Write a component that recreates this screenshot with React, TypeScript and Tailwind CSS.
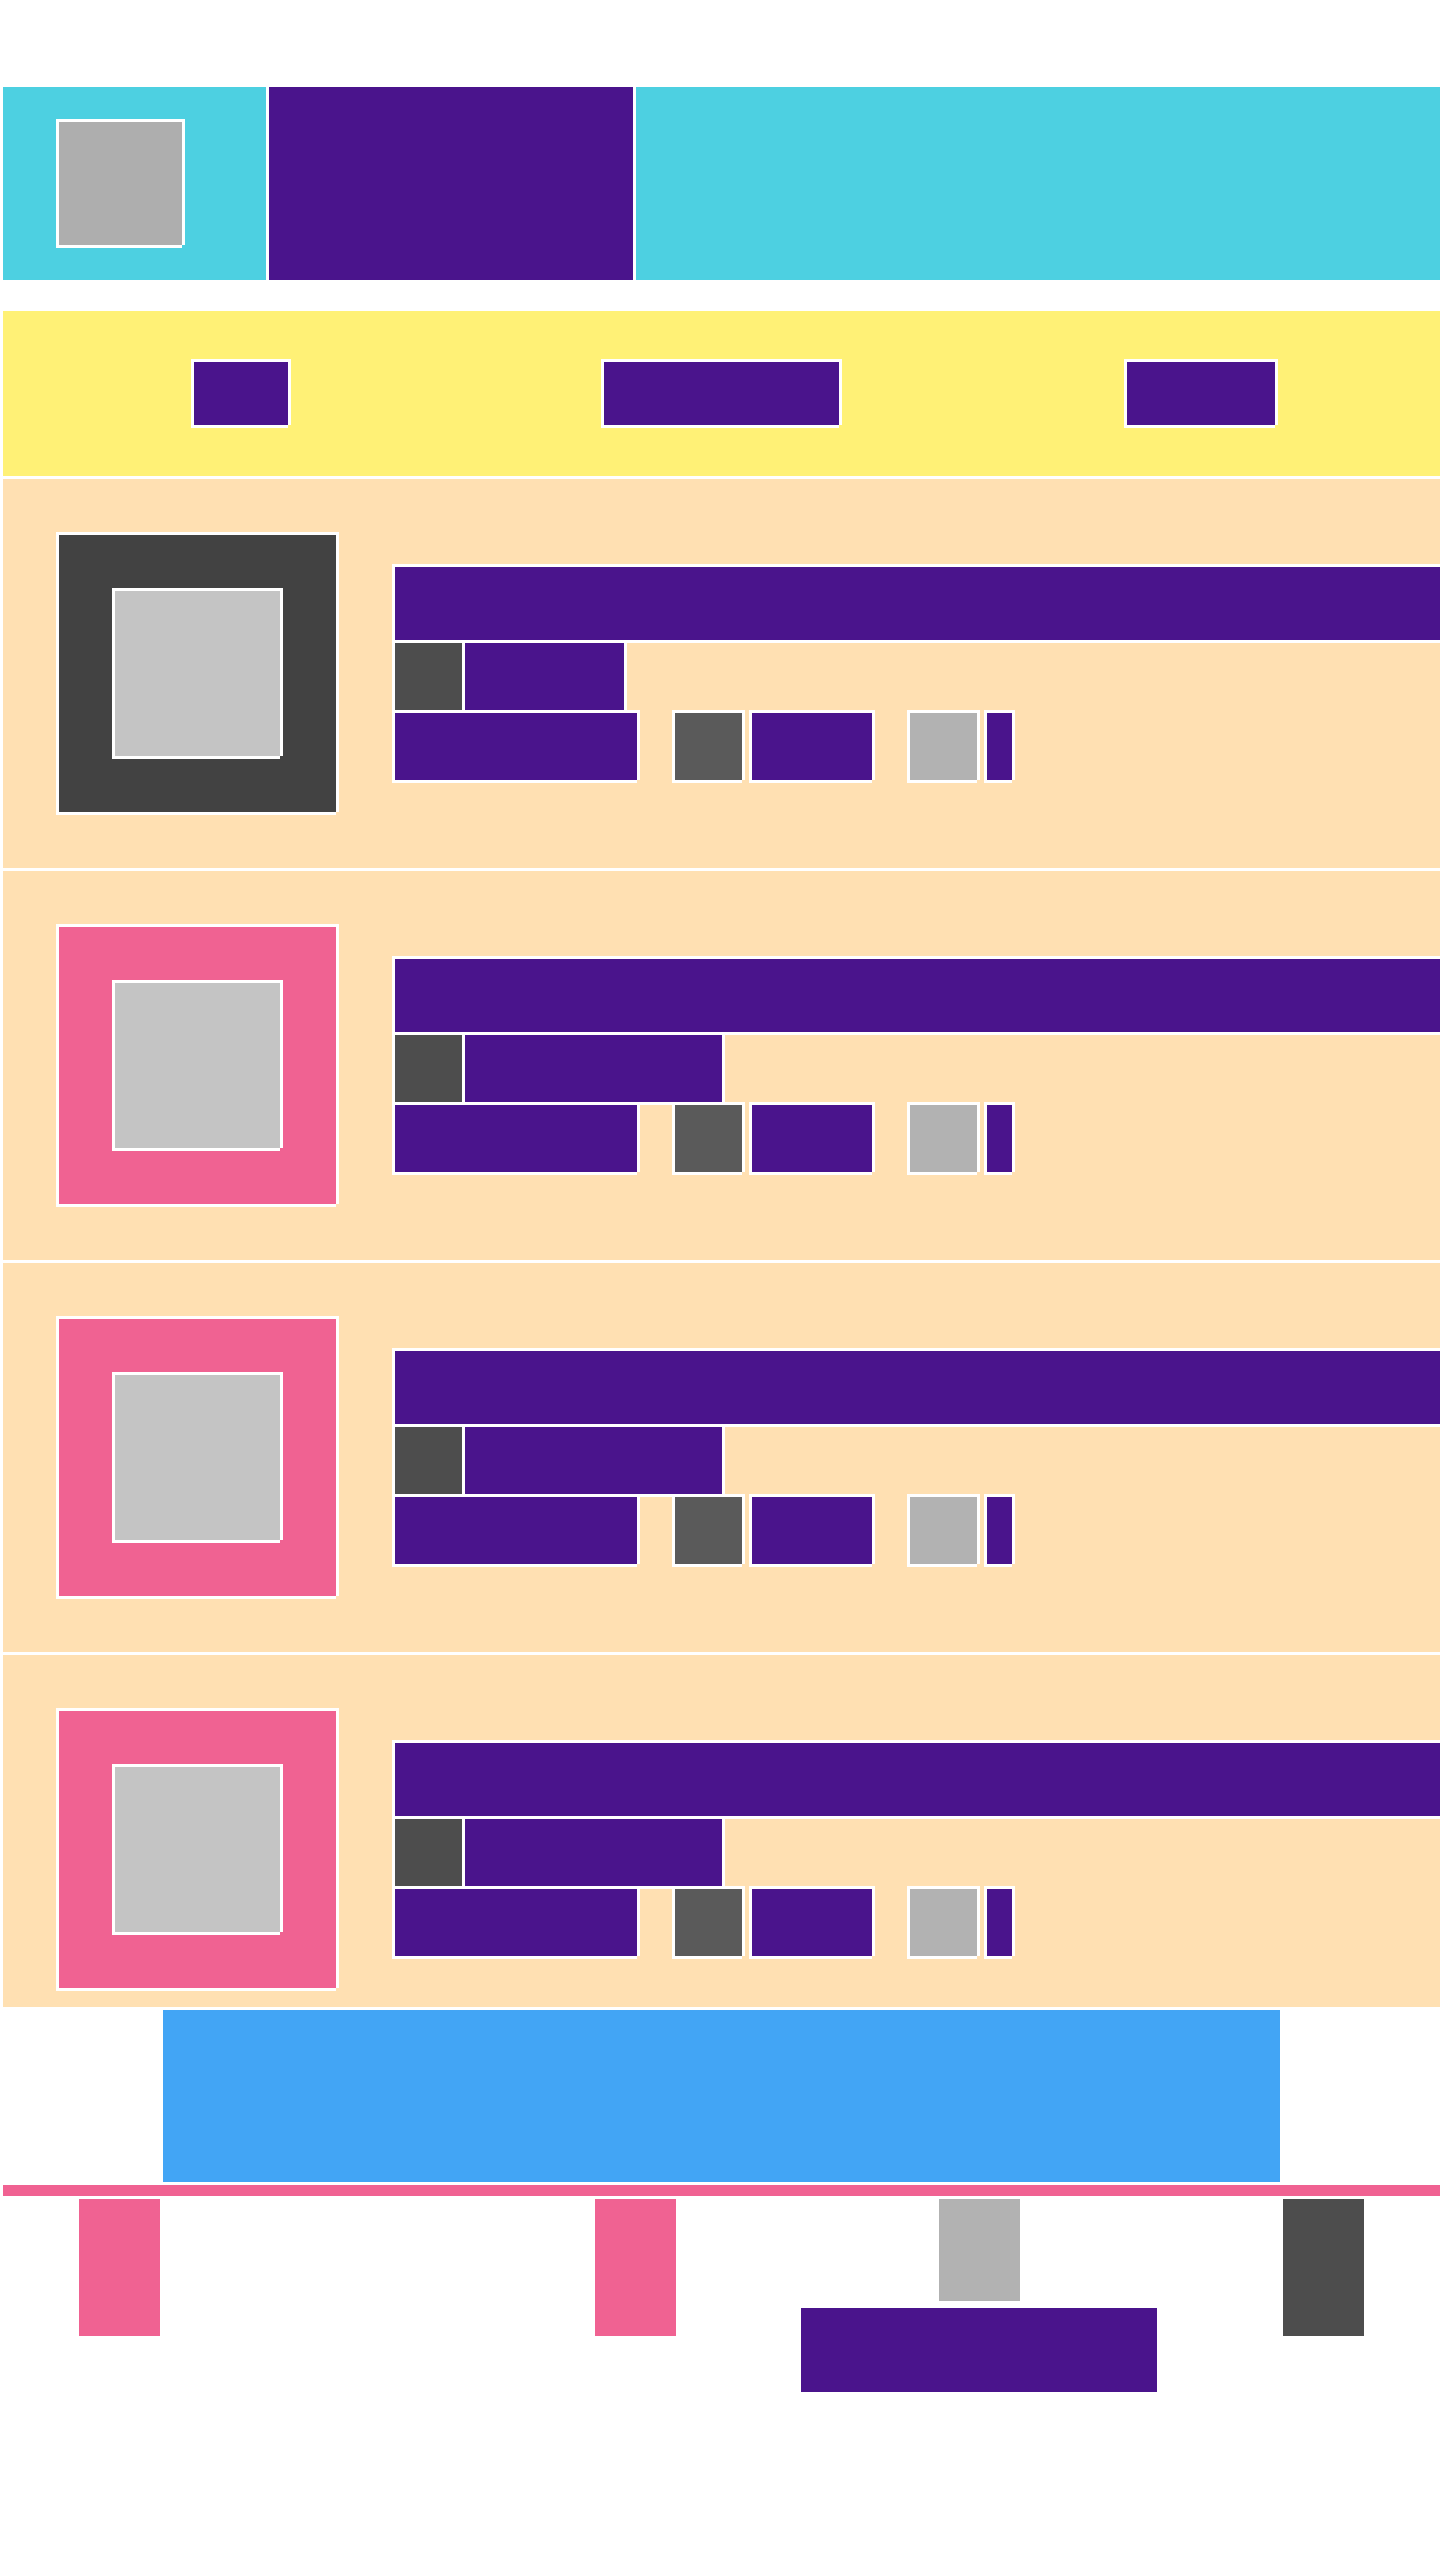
const edge =
  "shadow-[-3px_-3px_0_#fff,3px_-3px_0_#fff,-3px_3px_0_#fff,3px_0_0_#fff,0_3px_0_#fff]";

function Row({
  thumb,
  width,
  last,
}: {
  thumb: string;
  width: string;
  last?: boolean;
}) {
  return (
    <div
      className={`mt-[3px] ml-[3px] flex items-center gap-[59px] bg-[#ffe0b2] pt-[56px] pl-[56px] ${
        last ? "pb-[19px]" : "pb-[56px]"
      }`}
    >
      <div className={`flex h-[277px] w-[277px] shrink-0 items-center justify-center ${thumb} ${edge}`}>
        <div className={`h-[165px] w-[165px] bg-[#c4c4c4] ${edge}`} />
      </div>
      <div className="flex min-w-0 flex-1 flex-col gap-[3px]">
        <div className={`h-[73px] bg-[#4a148c] ${edge}`} />
        <div className="flex h-[67px] gap-[3px]">
          <div className={`w-[67px] bg-[#4d4d4d] ${edge}`} />
          <div className={`bg-[#4a148c] ${width} ${edge}`} />
        </div>
        <div className="flex h-[67px]">
          <div className={`w-[242px] bg-[#4a148c] ${edge}`} />
          <div className={`ml-[38px] w-[67px] bg-[#5a5a5a] ${edge}`} />
          <div className={`ml-[10px] w-[120px] bg-[#4a148c] ${edge}`} />
          <div className={`ml-[38px] w-[67px] bg-[#b2b2b2] ${edge}`} />
          <div className={`ml-[10px] w-[25px] bg-[#4a148c] ${edge}`} />
        </div>
      </div>
    </div>
  );
}

export default function App() {
  return (
    <div className="min-h-[2560px] w-[1440px] overflow-hidden bg-white pt-[87px]">
      <div className="ml-[3px] flex h-[193px] items-center bg-[#4dd0e1]">
        <div className={`ml-[56px] h-[123px] w-[123px] bg-[#aeaeae] ${edge}`} />
        <div className={`ml-[87px] w-[364px] self-stretch bg-[#4a148c] ${edge}`} />
      </div>

      <div className="mt-[31px] ml-[3px] flex h-[165px] items-center bg-[#fff176]">
        <div className={`ml-[191px] h-[63px] w-[94px] bg-[#4a148c] ${edge}`} />
        <div className={`ml-[316px] h-[63px] w-[235px] bg-[#4a148c] ${edge}`} />
        <div className={`ml-[288px] h-[63px] w-[148px] bg-[#4a148c] ${edge}`} />
      </div>

      <Row thumb="bg-[#424242]" width="w-[159px]" />
      <Row thumb="bg-[#f06292]" width="w-[257px]" />
      <Row thumb="bg-[#f06292]" width="w-[257px]" />
      <Row thumb="bg-[#f06292]" width="w-[257px]" last />

      <div className="mt-[3px] ml-[163px] h-[172px] w-[1117px] bg-[#42a5f5]" />
      <div className="mt-[3px] ml-[3px] h-[11px] bg-[#f06292]" />

      <div className="mt-[3px] flex items-start pl-[79px]">
        <div className="h-[137px] w-[81px] bg-[#f06292]" />
        <div className="ml-[435px] h-[137px] w-[81px] bg-[#f06292]" />
        <div className="ml-[125px] flex w-[356px] flex-col items-center gap-[7px]">
          <div className="h-[102px] w-[81px] bg-[#b2b2b2]" />
          <div className="h-[84px] w-[356px] bg-[#4a148c]" />
        </div>
        <div className="ml-[126px] h-[137px] w-[81px] bg-[#4d4d4d]" />
      </div>
    </div>
  );
}
